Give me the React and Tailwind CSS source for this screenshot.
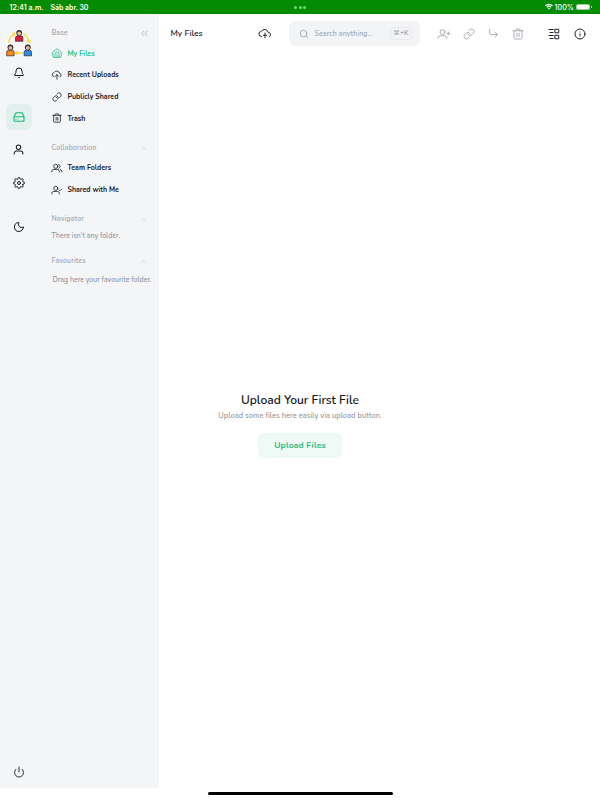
import React from 'react';
import clsx from 'clsx';
import { Bell, Moon, Power, Search, Info, ChevronsLeft, ChevronUp } from 'lucide-react';
import { FiSettings } from 'react-icons/fi';

const Svg = ({ size = 11, strokeWidth = 2, className, children }) => (
  <svg
    width={size}
    height={size}
    viewBox="0 0 24 24"
    fill="none"
    stroke="currentColor"
    strokeWidth={strokeWidth}
    strokeLinecap="round"
    strokeLinejoin="round"
    className={clsx('shrink-0 overflow-visible', className)}
  >
    {children}
  </svg>
);

const HomeIcon = (props) => (
  <Svg {...props}>
    <path d="M2 9.500L12 1.500l10 8V20a2.500 2.500 0 0 1-2.500 2.500h-15A2.500 2.500 0 0 1 2 20z" />
    <path d="M7 22V14.500a5 5 0 0 1 10 0V22M12 16v6" />
  </Svg>
);

const CloudIcon = (props) => (
  <Svg {...props}>
    <path d="M5 16A4.800 4.800 0 0 1 4.500 6.500a7.700 7.700 0 0 1 14.300 2.500A4 4 0 0 1 20 16.500" />
    <path d="M12 22V11.500M8 15l4-4 4 4" />
  </Svg>
);

const CloudPlusIcon = (props) => (
  <Svg {...props}>
    <path d="M5 17A5 5 0 0 1 4.500 7a7.500 7.500 0 0 1 14 2.200A4.200 4.200 0 0 1 20.500 17.300" />
    <path d="M12 10v9.500M8.500 14.500h7" />
  </Svg>
);

const LinkIcon = (props) => (
  <Svg {...props}>
    <path d="M10 13a5 5 0 0 0 7.540.540l3-3a5 5 0 0 0-7.070-7.070l-1.720 1.710" />
    <path d="M14 11a5 5 0 0 0-7.540-.540l-3 3a5 5 0 0 0 7.070 7.070l1.710-1.710" />
  </Svg>
);

const CornerIcon = (props) => (
  <Svg {...props}>
    <path d="M3.500 3.500V11a3.500 3.500 0 0 0 3.500 3.500h14M16 9.500l5 5-5 5" />
  </Svg>
);

const TrashIcon = (props) => (
  <Svg {...props}>
    <path d="M2 5.500h20M4 5.500V19.500a2.500 2.500 0 0 0 2.500 2.500h11a2.500 2.500 0 0 0 2.500-2.500V5.500M8 5.500V3.500A1.500 1.500 0 0 1 9.500 2h5A1.500 1.500 0 0 1 16 3.500V5.500M10 10.500v6.500M14 10.500v6.500" />
  </Svg>
);

const UserIcon = (props) => (
  <Svg {...props}>
    <circle cx="12" cy="7" r="4.800" />
    <path d="M2.500 22v-1.500a5 5 0 0 1 5-5h9a5 5 0 0 1 5 5V22" />
  </Svg>
);

const UsersIcon = (props) => (
  <Svg {...props}>
    <circle cx="9" cy="8" r="5" />
    <path d="M-.5 21.500v-1.500A4.500 4.500 0 0 1 4 15.500h9a4.500 4.500 0 0 1 4.500 4.500V21.500M16 3.300a5 5 0 0 1 0 9.400M20 15.500a4.500 4.500 0 0 1 3.500 4V21.500" />
  </Svg>
);

const UserCheckIcon = (props) => (
  <Svg {...props}>
    <circle cx="9" cy="8" r="5" />
    <path d="M-.5 21.500v-1.500A4.500 4.500 0 0 1 4 15.500h9a4.500 4.500 0 0 1 4.500 4.500V21.500M17 12l2 2 4.500-4.500" />
  </Svg>
);

const UserPlusIcon = (props) => (
  <Svg {...props}>
    <circle cx="9" cy="8" r="5" />
    <path d="M0 21v-1.500A4.500 4.500 0 0 1 4.500 15.500h8.500a4.500 4.500 0 0 1 4.500 4V21M17.500 11h6.500M20.800 8v6" />
  </Svg>
);

const DriveIcon = (props) => (
  <Svg {...props}>
    <path d="M2 11.500h20v7a2 2 0 0 1-2 2H4a2 2 0 0 1-2-2zM2 11.500l3.300-6.500A2.500 2.500 0 0 1 7.500 3.500h9a2.500 2.500 0 0 1 2.200 1.500L22 11.500M6 16h.010M10 16h.010" />
  </Svg>
);

const ViewIcon = (props) => (
  <Svg {...props}>
    <path d="M2 3h8.500M4 9h6M2 15h8.500M4 21h6M14.500 2.500H21.500v7H14.500zM14.500 14.500H21.500v7H14.500z" />
  </Svg>
);

const Person = ({ x, y, color }) => (
  <g transform={`translate(${x} ${y})`}>
    <path d="M-3.700 11.500V8q0-2 2-2h3.400q2 0 2 2v3.500z" fill={color} stroke="#2d2430" strokeWidth="0.700" />
    <circle cx="0" cy="3" r="2.900" fill="#32292d" />
    <circle cx="0" cy="3.500" r="1.900" fill="#e0bd9c" />
  </g>
);

const Logo = () => (
  <svg width="28" height="28" viewBox="0 0 28 28" className="shrink-0">
    <circle cx="14" cy="14" r="13.500" fill="#f8f8f8" />
    <g fill="none" stroke="#fbd83c" strokeWidth="1.300">
      <path d="M3.500 14A11 11 0 0 1 9.500 4.800M7.500 3.600l2.500 1-1.200 2.400" />
      <path d="M18 4.500a11 11 0 0 1 6 8.500M22 11.500l2 2 1.400-2.400" />
      <path d="M18 24h-7.500M12.500 22.300L10.500 24l2 1.700" />
    </g>
    <Person x="14.200" y="0.800" color="#d91e36" />
    <Person x="5.400" y="15.300" color="#f88b12" />
    <Person x="22.800" y="15.300" color="#2e8be6" />
  </svg>
);

const StatusBar = () => (
  <div className="grid h-3.5 shrink-0 grid-cols-3 items-center bg-[#038c03] font-['Inter','Liberation_Sans',sans-serif] text-[7px] leading-none font-semibold text-white">
    <div className="flex gap-[7px] pl-[9.500px]">
      <span className="tracking-[0.060px]">12:41 a.m.</span>
      <span className="tracking-[-0.050px]">Sáb abr. 30</span>
    </div>
    <div className="flex justify-center gap-[1.500px]">
      <i className="size-[3px] rounded-full bg-[#72d872]" />
      <i className="size-[3px] rounded-full bg-[#72d872]" />
      <i className="size-[3px] rounded-full bg-[#72d872]" />
    </div>
    <div className="flex items-center justify-end pr-2">
      <svg width="8" height="7" viewBox="0 0 16 13" fill="none" stroke="#fff" strokeWidth="2.400" className="mr-[2px]">
        <path d="M1 5a10 10 0 0 1 14 0M3.700 8a6.200 6.200 0 0 1 8.600 0" />
        <path d="M8 12.500L5.500 10a3.700 3.700 0 0 1 5 0z" fill="#fff" stroke="none" />
      </svg>
      <span className="pt-px text-[7.200px] font-medium">100%</span>
      <span className="ml-0.5 h-[6.500px] w-3.5 rounded-[2px] border-[0.500px] border-[#9bd49b] bg-white" />
      <span className="ml-px h-0.5 w-px bg-[#9bd49b]" />
    </div>
  </div>
);

const IconRail = () => (
  <div className="flex w-[37px] shrink-0 flex-col items-center pt-[15px] pb-[10px] text-[#17191f]">
    <Logo />
    <Bell size={12} strokeWidth={2} className="mt-[10px]" />
    <div className="mt-[25px] flex size-[26px] items-center justify-center rounded-md bg-[#e2f0ed] text-[#10bb75]">
      <DriveIcon size={12} strokeWidth={2.2} />
    </div>
    <UserIcon size={11} strokeWidth={2.2} className="mt-[14px]" />
    <FiSettings size={12} strokeWidth={2} className="mt-[22px]" />
    <Moon size={12} strokeWidth={2} className="mt-8" />
    <Power size={12} strokeWidth={1.8} className="mt-auto" />
  </div>
);

const NavItem = ({ icon: Icon, label, active }) => (
  <div className={clsx('flex h-[21.660px] items-center gap-1.5 font-bold', active ? 'text-[#2dc282]' : 'text-[#20222d]')}>
    <Icon size={10} strokeWidth={2} />
    <span className="pt-px">{label}</span>
  </div>
);

const GroupTitle = ({ children, className }) => (
  <div className={clsx('flex h-[10px] items-center justify-between pr-3 font-semibold tracking-[0.140px] text-[#a4a8b3]', className)}>
    <span>{children}</span>
    <ChevronUp size={7} strokeWidth={2.2} className="text-[#c0c3ca]" />
  </div>
);

const Sidebar = () => (
  <div className="min-w-0 flex-1 pt-3.5 pl-[14.500px] text-[7px] leading-[10px] whitespace-nowrap">
    <div className="flex h-[10px] items-center justify-between pr-[9px] font-semibold text-[#a4a8b3]">
      <span className="tracking-[0.100px]">Base</span>
      <ChevronsLeft size={11} strokeWidth={1.8} />
    </div>
    <div className="mt-[4.500px]">
      <NavItem icon={HomeIcon} label="My Files" active />
      <NavItem icon={CloudIcon} label="Recent Uploads" />
      <NavItem icon={LinkIcon} label="Publicly Shared" />
      <NavItem icon={TrashIcon} label="Trash" />
    </div>
    <GroupTitle className="mt-[14px]">Collaboration</GroupTitle>
    <div className="mt-[4px]">
      <NavItem icon={UsersIcon} label="Team Folders" />
      <NavItem icon={UserCheckIcon} label="Shared with Me" />
    </div>
    <GroupTitle className="mt-[14px]">Navigator</GroupTitle>
    <p className="mt-[7px] font-medium text-[#8f939d]">There isn't any folder.</p>
    <GroupTitle className="mt-[15px]">Favourites</GroupTitle>
    <p className="mt-[8.500px] pl-px font-medium text-[#8f939d]">Drag here your favourite folder.</p>
  </div>
);

const Toolbar = () => (
  <div className="flex h-[39px] items-center pr-[14px] pl-[11.500px] text-[#20222b]">
    <h1 className="w-[88px] text-[8.500px] font-semibold">My Files</h1>
    <CloudPlusIcon size={12} strokeWidth={2} />
    <div className="ml-[18px] flex h-[25px] w-[131.500px] items-center rounded-md bg-[#f3f4f6] pr-2 pl-[10px] text-[#a5a9b2]">
      <Search size={10} strokeWidth={2.2} />
      <span className="ml-1.5 pt-px text-[7px] font-semibold tracking-[0.100px]">Search anything...</span>
      <kbd className="ml-auto flex h-[13px] w-[22px] items-center justify-center rounded-[3px] border border-[#e8eaed] font-['Inter','DejaVu_Sans',sans-serif] text-[6.500px] font-semibold">⌘+K</kbd>
    </div>
    <div className="ml-[18px] flex items-center gap-[13px] text-[#a3a6ae]">
      <UserPlusIcon size={12} strokeWidth={1.800} />
      <LinkIcon size={12} strokeWidth={1.800} />
      <CornerIcon size={11} strokeWidth={2} />
      <TrashIcon size={12} strokeWidth={1.800} />
    </div>
    <div className="ml-auto flex items-center gap-3.5">
      <ViewIcon size={12} strokeWidth={2} />
      <Info size={12} strokeWidth={2} />
    </div>
  </div>
);

const EmptyPage = () => (
  <div className="flex flex-col items-center">
    <h2 className="text-[12px] leading-4 font-semibold text-[#151722]">Upload Your First File</h2>
    <p className="mt-[2.500px] text-[7.500px] leading-[10px] font-medium tracking-[0.020px] text-[#91949c]">Upload some files here easily via upload button.</p>
    <button className="mt-[12.500px] h-[25px] w-[84px] rounded-md bg-[#effaf6] text-[8.500px] font-bold tracking-[0.160px] text-[#2ab87b]">
      Upload Files
    </button>
  </div>
);

const App = () => (
  <div className="flex h-[800px] w-[600px] flex-col overflow-hidden bg-white font-['Nunito','Lato',sans-serif]">
    <StatusBar />
    <div className="flex h-[774px] shrink-0">
      <aside className="flex w-[159px] shrink-0 bg-[#f3f5f7]">
        <IconRail />
        <Sidebar />
      </aside>
      <main className="flex min-w-0 flex-1 flex-col">
        <Toolbar />
        <div className="-ml-[159px] pt-[339px]">
          <EmptyPage />
        </div>
      </main>
    </div>
    <div className="flex flex-1 justify-center pt-1">
      <div className="h-[3px] w-[185px] rounded-full bg-black" />
    </div>
  </div>
);

export default App;
